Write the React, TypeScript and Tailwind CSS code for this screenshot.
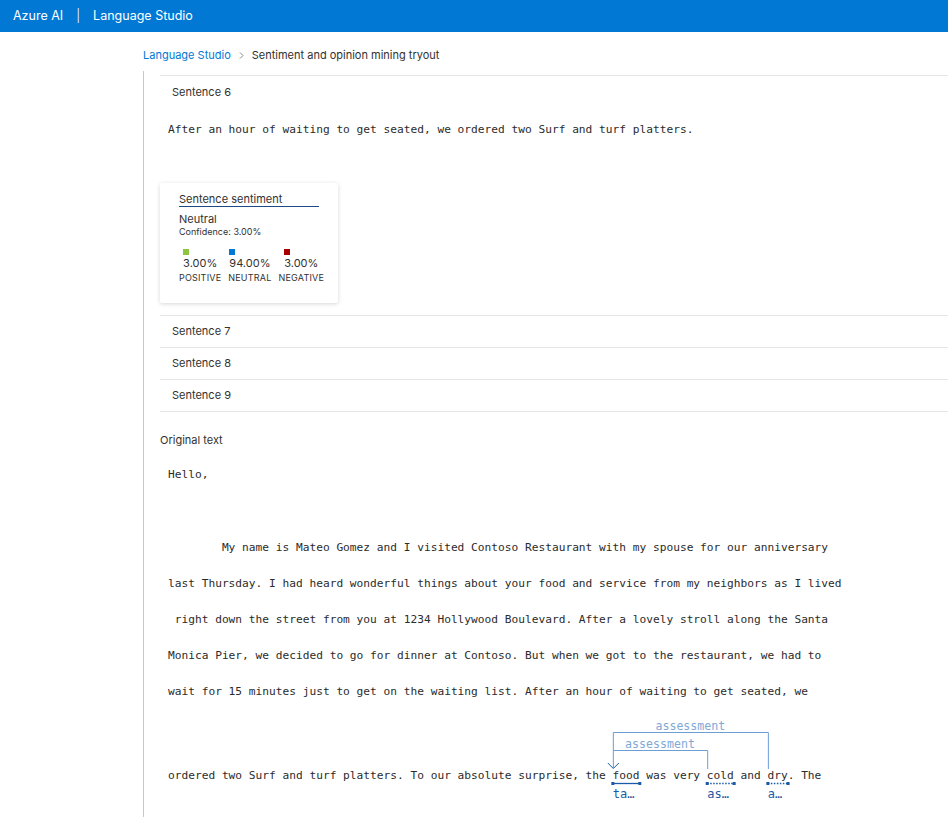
import React from "react";

const mono = "font-['DejaVu_Sans_Mono','Liberation_Mono',monospace] text-[11.2px] text-[#2b2b2b]";

const paragraph = [
  "        My name is Mateo Gomez and I visited Contoso Restaurant with my spouse for our anniversary",
  "last Thursday. I had heard wonderful things about your food and service from my neighbors as I lived",
  " right down the street from you at 1234 Hollywood Boulevard. After a lovely stroll along the Santa",
  "Monica Pier, we decided to go for dinner at Contoso. But when we got to the restaurant, we had to",
  "wait for 15 minutes just to get on the waiting list. After an hour of waiting to get seated, we",
];

const Score = ({ color, value, label }: { color: string; value: string; label: string }) => (
  <div className="flex flex-col items-center">
    <div className="flex flex-col">
      <span className={`w-[6px] h-[6px] ${color}`} />
      <span className="mt-[2px] text-[11px] leading-[13px] text-[#323130]">{value}</span>
    </div>
    <span className="mt-[2px] text-[9px] leading-[11px] tracking-[0.2px] text-[#323130]">{label}</span>
  </div>
);

const SentimentCard = () => (
  <div className="w-[178px] h-[120px] bg-white rounded-[2px] shadow-[0_1px_4px_rgba(0,0,0,0.16)] pl-[19px] pt-[9px]">
    <div className="w-[140px] border-b border-[#1d4a85] text-[11px] leading-[14px] text-[#323130]">
      Sentence sentiment
    </div>
    <div className="mt-[6px] text-[11px] leading-[13px] text-[#323130]">Neutral</div>
    <div className="text-[9px] leading-[11px] text-[#323130]">Confidence: 3.00%</div>
    <div className="mt-[12px] flex gap-[7px]">
      <Score color="bg-[#8cc63f]" value="3.00%" label="POSITIVE" />
      <Score color="bg-[#0078d4]" value="94.00%" label="NEUTRAL" />
      <Score color="bg-[#a80000]" value="3.00%" label="NEGATIVE" />
    </div>
  </div>
);

const SentenceRow = ({ n }: { n: number }) => (
  <div className="h-[32px] border-t border-[#e6e6e6] flex items-center pl-[12px] text-[11px] text-[#323130]">
    Sentence {n}
  </div>
);

const Annotated = () => {
  const cw = 6.74;
  const food = 66 * cw;
  const cold = 80 * cw;
  const dry = 89 * cw;
  const line = "#6c9dd3";
  const dark = "#1b5aa6";
  return (
    <div className="relative pt-[48px] pb-[30px]">
      <div className={`h-[36px] flex items-center whitespace-pre ${mono}`}>
        ordered two Surf and turf platters. To our absolute surprise, the food was very cold and dry. The
      </div>
      <svg className="absolute left-0 top-0" width="720" height="100" fill="none">
        <path d={`M${dry + 0.5} 59 V22.5 H${food + 0.5} V58`} stroke={line} strokeWidth="1" />
        <path d={`M${cold + 0.5} 59 V40.5 H${food + 0.5}`} stroke={line} strokeWidth="1" />
        <path d={`M${food - 5} 53 L${food + 0.5} 58.5 L${food + 6} 53`} stroke={dark} strokeWidth="1" />
        <text x={(food + dry) / 2} y="20" textAnchor="middle" fill="#7fa8d7" fontSize="11.6" fontFamily="DejaVu Sans Mono, monospace">
          assessment
        </text>
        <text x={(food + cold) / 2} y="38" textAnchor="middle" fill="#7fa8d7" fontSize="11.6" fontFamily="DejaVu Sans Mono, monospace">
          assessment
        </text>
        <line x1={food} x2={food + 4 * cw} y1="73.5" y2="73.5" stroke={dark} strokeWidth="1.3" />
        <line x1={cold} x2={cold + 4 * cw} y1="73.5" y2="73.5" stroke={dark} strokeWidth="1.3" strokeDasharray="1.5 1.5" />
        <line x1={dry} x2={dry + 3 * cw} y1="73.5" y2="73.5" stroke={dark} strokeWidth="1.3" strokeDasharray="1.5 1.5" />
        {[food, food + 4 * cw, cold, cold + 4 * cw, dry, dry + 3 * cw].map((x, i) => (
          <rect key={i} x={x - 1.5} y="72" width="3" height="3" fill={dark} />
        ))}
        <text x={food} y="88" fill={dark} fontSize="12" fontFamily="DejaVu Sans Mono, monospace">ta…</text>
        <text x={cold} y="88" fill={dark} fontSize="12" fontFamily="DejaVu Sans Mono, monospace">as…</text>
        <text x={dry} y="88" fill={dark} fontSize="12" fontFamily="DejaVu Sans Mono, monospace">a…</text>
      </svg>
    </div>
  );
};

export default function App() {
  return (
    <div className="min-h-screen bg-white font-['Inter','Noto_Sans',sans-serif] overflow-hidden">
      <div className="h-8 bg-[#0078d4] text-white text-[12.5px] flex items-center pl-[13px]">
        <span>Azure AI</span>
        <span className="mx-[13px] font-light">|</span>
        <span>Language Studio</span>
      </div>

      <div className="pl-[143px] pt-[15px] flex items-center text-[11px] leading-[16px]">
        <span className="text-[#0078d4]">Language Studio</span>
        <svg className="mx-[6px]" width="9" height="9" viewBox="0 0 9 9" fill="none">
          <path d="M3 1.5 L6 4.5 L3 7.5" stroke="#8a8886" strokeWidth="1" />
        </svg>
        <span className="text-[#323130]">Sentiment and opinion mining tryout</span>
      </div>

      <div className="ml-[143px] mt-[8px] border-l border-[#c8c8c8] pl-[16px] pt-[4px]">
        <div className="border-t border-[#e6e6e6]">
          <div className="h-[32px] flex items-center pl-[12px] text-[11px] text-[#323130]">Sentence 6</div>
          <div className={`mt-[4px] h-[36px] flex items-center pl-[8px] whitespace-pre ${mono}`}>
            After an hour of waiting to get seated, we ordered two Surf and turf platters.
          </div>
          <div className="mt-[35px] mb-[12px]">
            <SentimentCard />
          </div>
        </div>
        <SentenceRow n={7} />
        <SentenceRow n={8} />
        <div className="border-b border-[#e6e6e6]">
          <SentenceRow n={9} />
        </div>

        <div className="pt-[20px] text-[11px] leading-[16px] text-[#323130]">Original text</div>
        <div className="mt-[9px] pl-[8px]">
          <div className={`h-[36px] flex items-center ${mono}`}>Hello,</div>
          <div className="h-[37px]" />
          {paragraph.map((t, i) => (
            <div key={i} className={`h-[36px] flex items-center whitespace-pre ${mono}`}>
              {t}
            </div>
          ))}
          <Annotated />
        </div>
      </div>
    </div>
  );
}
